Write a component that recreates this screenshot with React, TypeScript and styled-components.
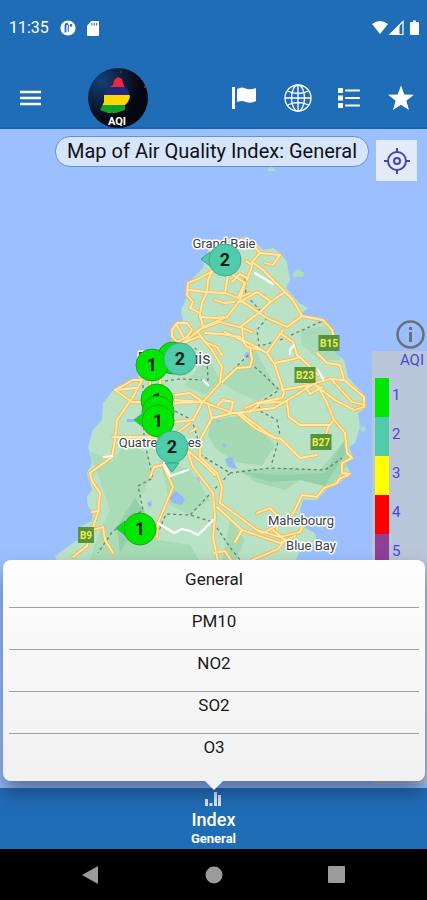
import React from "react";
import styled, { createGlobalStyle } from "styled-components";

const GlobalStyle = createGlobalStyle`
  *, *::before, *::after { box-sizing: border-box; }
  body { margin: 0; background: #000; font-family: Roboto, "Noto Sans", sans-serif; }
  button { font: inherit; color: inherit; border: 0; padding: 0; background: none; cursor: pointer; }
`;

const BLUE = "#206db7";

const Screen = styled.div`
  display: flex;
  flex-direction: column;
  min-height: 100vh;
`;

const StatusBar = styled.div`
  display: flex;
  align-items: center;
  justify-content: space-between;
  height: 56px;
  padding: 0 6px 0 9px;
  background: ${BLUE};
  color: #fff;
`;

const StatusGroup = styled.div<{ $gap: number }>`
  display: flex;
  align-items: center;
  gap: ${(p) => p.$gap}px;
`;

const Clock = styled.time`
  font-size: 16px;
  line-height: 20px;
`;

const Toolbar = styled.header`
  display: flex;
  align-items: center;
  justify-content: space-between;
  height: 73px;
  padding: 12px 12px 0 19px;
  background: ${BLUE};
  border-bottom: 2px solid #1565ae;
  color: #fff;
`;

const ToolGroup = styled.div<{ $gap: number }>`
  display: flex;
  align-items: center;
  gap: ${(p) => p.$gap}px;
`;

const IconButton = styled.button`
  display: flex;
  align-items: center;
  justify-content: center;
`;

const MapArea = styled.main`
  position: relative;
  flex: 1;
  min-height: 480px;
  background: #9cc0ff;
`;

const MapCanvas = styled.svg`
  position: absolute;
  inset: 0;
  width: 100%;
  height: 100%;
`;

const TitleRow = styled.div`
  position: relative;
  display: flex;
  align-items: flex-start;
  justify-content: flex-end;
  gap: 7px;
  padding: 7px 10px 0;
`;

const Title = styled.h1`
  margin: 0;
  padding: 0 11px;
  border: 1px solid #5b95d6;
  border-radius: 15px;
  background: #d6e5fb;
  color: #111;
  font-size: 20px;
  font-weight: 400;
  line-height: 29px;
  white-space: nowrap;
`;

const LocateButton = styled(IconButton)`
  width: 41px;
  height: 41px;
  margin-top: 4px;
  background: #e3ebfb;
`;

const InfoButton = styled(IconButton)`
  position: absolute;
  top: 191px;
  right: 2px;
`;

const Legend = styled.aside`
  position: absolute;
  top: 222px;
  right: 0;
  bottom: 4px;
  width: 55px;
  background: #bac6da;
  color: #4a46dc;
`;

const LegendTitle = styled.h2`
  margin: 0;
  padding: 0 3px 0 0;
  font-size: 15px;
  font-weight: 400;
  line-height: 18px;
  text-align: right;
`;

const LegendList = styled.ul`
  list-style: none;
  margin: 9px 0 0;
  padding: 0 0 0 3px;
`;

const LegendItem = styled.li<{ $color: string }>`
  display: flex;
  align-items: center;
  height: 39px;
  padding: 0 0 6px 3px;
  border-left: 14px solid ${(p) => p.$color};
  font-size: 15px;
`;

const Popover = styled.section`
  position: absolute;
  left: 3px;
  right: 2px;
  bottom: 7px;
  z-index: 2;
  padding: 6px;
  border-radius: 8px;
  background: linear-gradient(#fdfdfd, #f1f1f1);
  box-shadow: 0 12px 20px rgba(15, 35, 70, 0.5);

  &::after {
    content: "";
    position: absolute;
    top: 100%;
    left: 50%;
    margin-left: -9px;
    border: 9px solid transparent;
    border-top-color: #f1f1f1;
    border-bottom: 0;
  }
`;

const OptionList = styled.ul`
  list-style: none;
  margin: 0;
  padding: 0;

  li + li { border-top: 1px solid #9da29f; }
`;

const Option = styled.button`
  display: flex;
  justify-content: center;
  width: 100%;
  height: 41px;
  padding-top: 2px;
  color: #1b1b1b;
  font-size: 17px;
  font-weight: 400;
  line-height: 22px;
`;

const BottomBar = styled.nav`
  display: flex;
  justify-content: center;
  height: 61px;
  background: ${BLUE};
  color: #fff;
`;

const IndexTab = styled.button`
  display: flex;
  flex-direction: column;
  align-items: center;
  padding-top: 4px;
`;

const TabName = styled.span`
  margin-top: 2px;
  font-size: 18px;
  font-weight: 500;
  line-height: 22px;
`;

const TabValue = styled.span`
  font-size: 13px;
  font-weight: 700;
  line-height: 16px;
`;

const SystemBar = styled.nav`
  display: grid;
  grid-template-columns: repeat(3, 123px);
  justify-content: center;
  height: 51px;
  background: #000;
`;

const roads = [
  "M218 268 200 278 188 283 187 295 193 302 190 308 200 313",
  "M213 270 208 280 207 292 202 303 200 315 203 327",
  "M188 290 207 292 225 293 238 298 250 293",
  "M228 275 225 293M245 283 238 298",
  "M183 343 203 327 227 317 240 300 245 283 230 273",
  "M172 330 177 323 187 323 192 330 187 337 177 342 172 336Z M176 324 184 338",
  "M200 317 217 318 224 317M203 328 220 322 242 328 252 332",
  "M197 331 205 342 217 347 222 355",
  "M205 333 222 334 240 337 247 347 262 350",
  "M186 342 200 336 212 350 222 367 220 383 203 402 173 403",
  "M240 240 250 241 260 253 252 262 263 270 283 290 293 300 302 316 323 320 332 330 336 345",
  "M260 253 280 255 273 265 265 263M253 263 247 280 M246 261 252 265",
  "M240 327 260 312 270 302 285 292M240 302 257 292 272 302",
  "M240 300 267 318 287 327 302 316",
  "M242 328 243 340 267 353 283 330M243 340 225 332",
  "M280 333 293 342 297 355 300 358",
  "M232 282 240 274 247 278M215 300 224 303 234 302",
  "M237 338 257 347 267 353 275 365 280 380 284 393 282 398 257 403 245 408",
  "M250 347 252 360 250 367 237 368 222 382",
  "M274 363 290 360 300 357 310 367 318 375",
  "M317 353 327 363 340 365 344 380 364 397 364 407 354 410 335 400 315 385",
  "M332 380 352 402 364 405M315 383 330 379 344 380",
  "M237 413 257 410 274 408 296 395 315 383M282 390 310 385M306 388 310 394 322 387",
  "M287 402 289 417 300 425 330 425 334 420 327 403 318 386",
  "M334 420 345 433 347 453 352 458 342 463 342 473 350 474 339 479 337 483 324 488 317 497 302 495 295 510 290 518",
  "M237 413 255 428 274 438 280 438 300 458 317 455M329 425 325 437",
  "M257 513 270 508 279 517 277 529",
  "M175 395 190 393 203 402 233 413 250 412 260 403 280 402",
  "M175 400 203 402M212 418 233 413 M240 413 267 433 278 439",
  "M208 403 212 418 200 440 200 457 217 473 222 487 220 503 257 530 280 537 300 532",
  "M218 405 223 400 233 402 231 411",
  "M175 422 193 420 202 403M178 432 190 423M190 432 197 428",
  "M178 432 187 450 193 467 213 493 215 517 213 537 217 557 218 562",
  "M187 450 206 466 215 475M214 553 225 551 232 562",
  "M217 507 242 530 280 543 295 536M242 530 235 542M273 530 285 540 278 549 262 556 252 560",
  "M150 477 154 467 163 465 173 487 158 523 157 537",
  "M142 380 133 397 117 420 115 440 112 457 90 473 92 481 100 493 98 512 92 530 103 527 105 540 113 553",
  "M92 530 87 546 73 557M92 512 99 511",
  "M142 380 133 380 115 390 132 402 146 402M115 390 137 388",
  "M113 437 157 437M150 378 150 440M160 375 160 440M170 398 175 404",
  "M278 525 263 533 257 530M300 532 306 520",
];

const tracks = [
  "M245 278 246 295 267 318 257 330 259 346",
  "M257 347 280 340 325 320M257 347 240 363 220 383",
  "M165 381 180 379 208 380 207 360 195 348",
  "M250 363 263 374 279 390 264 400 258 410 277 420 280 435 271 466",
  "M143 385 144 440 153 478 138 486 143 510 112 532 98 553",
  "M175 411 192 420 198 440 201 455 230 473 210 494 190 515",
  "M230 473 270 468 325 470 342 458",
  "M157 535 166 514 190 515 213 522 232 550 242 562",
];

type Station = { x: number; y: number; level: number; dx?: number; dy?: number; covered?: boolean };
const levelColors = ["#00e600", "#50ccaa", "#ffff00", "#ff0000", "#8f3f97"];
const stations: Station[] = [
  { x: 225, y: 260, level: 2, dx: -1 },
  { x: 173, y: 358, level: 1, covered: true },
  { x: 152, y: 365, level: 1 },
  { x: 180, y: 359, level: 2 },
  { x: 157, y: 400, level: 1 },
  { x: 158, y: 412, level: 1, covered: true },
  { x: 158, y: 421, level: 1, dx: -1 },
  { x: 172, y: 447, level: 2, dy: 1 },
  { x: 140, y: 529, level: 1, dx: -1 },
];

const places = [
  { name: "Grand Baie", x: 224, y: 248, size: 13 },
  { name: "Port Louis", x: 174, y: 364, size: 16 },
  { name: "Quatre Bornes", x: 160, y: 447, size: 13 },
  { name: "Mahebourg", x: 301, y: 525, size: 13 },
  { name: "Blue Bay", x: 311, y: 550, size: 13 },
];

const shields = [
  { name: "B15", x: 329, y: 343, w: 21 },
  { name: "B23", x: 305, y: 375, w: 21 },
  { name: "B27", x: 321, y: 442, w: 21 },
  { name: "B9", x: 86, y: 535, w: 16 },
];

const LAND =
  "M208 250 222 240 246 237 257 244 263 250 273 248 280 253 287 262 290 280 286 288 299 303 308 308 301 314 312 319 328 325 336 338 332 350 344 360 348 377 366 397 365 409 358 413 360 427 355 443 349 447 353 457 346 463 350 473 340 483 327 489 317 500 303 500 300 510 304 527 315 533 317 543 307 549 299 552 280 600 230 670 120 660 70 600 55 556 73 543 78 540 80 527 92 521 93 512 88 507 87 497 92 490 87 473 92 463 88 447 93 430 102 420 103 403 115 388 138 379 143 355 172 345 171 329 183 320 181 310 187 297 188 283 203 268Z";

function IslandMap() {
  return (
    <MapCanvas viewBox="0 129 427 660" preserveAspectRatio="xMidYMin slice" role="img" aria-label="Map of Mauritius">
      <defs>
        <clipPath id="land"><path d={LAND} /></clipPath>
      </defs>
      <path d={LAND} fill="#bae2c4" />
      <path d="M293 273l5-4 6 4-1 4h-10ZM267 171l4-6 5 6ZM360 427l4-1 2 4-4 3Z" fill="#a9dfbc" />
      <g clipPath="url(#land)" fill="#a4d9b4">
        <path d="M300 330 330 325 340 360 320 360 302 345ZM235 370 255 350 277 388 258 401 237 392 222 383ZM207 355 220 380 205 395 185 385Z" opacity=".7" />
        <path d="M212 420 245 415 275 445 262 466 235 462 215 448 208 435ZM240 470 290 468 320 470 345 440 350 462 330 487 300 480 285 490 255 482Z" />
        <path d="M88 450 112 462 128 440 148 455 150 478 135 510 128 540 160 545 180 560H90L100 530 110 510 100 480ZM160 460 190 470 210 500 190 515 170 505Z" opacity=".75" />
        <path d="M125 510 140 505 157 540 190 545 200 562 120 562 118 535ZM230 520 245 540 235 562H222Z" opacity=".9" />
        <path d="M117 527 135 498 145 512 120 552ZM240 472 280 475 325 473 343 442 346 452 325 486 300 480 270 482Z" fill="#8fcca9" opacity=".8" />
      </g>
      <path d="M168 497l8-6 9 8-3 6-9-2ZM225 459l7-2 5 12-9-2ZM246 352l4 1-1 6-5-3ZM222 443l5 2-3 3ZM147 503l4-2 1 4-3 2ZM127 419h8l-1 3h-7ZM216 420l6 1-5 2ZM200 484l-4-7 3 1Z" fill="#96b9fb" />
      <g fill="none" stroke="#68806f" strokeWidth="1.3" strokeDasharray="3 3">
        {tracks.map((d) => <path key={d} d={d} />)}
      </g>
      <g fill="none" strokeLinejoin="round" strokeLinecap="round">
        {roads.map((d) => <path key={d} d={d} stroke="#fbb94e" strokeWidth="3.6" />)}
        {roads.map((d) => <path key={d} d={d} stroke="#ffecad" strokeWidth="1.8" />)}
        <path d="M255 273 273 284M164 463 170 476 188 470M158 523 174 533 182 529 190 531 198 535 213 520M318 370 323 379M290 354v-4l4-5M104 457l8-1M203 380l5 5" stroke="#fff" strokeWidth="2.2" />
      </g>
      <g fontWeight="400" textAnchor="middle" fill="#3b4248" stroke="#fff" strokeWidth="3" strokeLinejoin="round" paintOrder="stroke">
        {places.map((p) => <text key={p.name} x={p.x} y={p.y} fontSize={p.size}>{p.name}</text>)}
      </g>
      {shields.map((s) => (
        <g key={s.name}>
          <rect x={s.x - s.w / 2} y={s.y - 8} width={s.w} height="16" fill="#55933f" />
          <text x={s.x} y={s.y + 4} fontSize="10" fontWeight="700" textAnchor="middle" fill="#f4ee4e">{s.name}</text>
        </g>
      ))}
      {stations.map((s) => {
        const fill = levelColors[s.level - 1];
        return (
          <g key={`${s.x}-${s.y}`}>
            {s.dx && <path d={`M${s.x - 24} ${s.y - 1}l9-7v14Z`} fill={fill} stroke="#3fa583" strokeWidth="1" />}
            {s.dy && <path d={`M${s.x - 7} ${s.y + 16}h14l-7 9Z`} fill={fill} stroke="#3fa583" strokeWidth="1" />}
            <circle cx={s.x} cy={s.y} r="16" fill={fill} stroke={s.level === 1 ? "#1ba51e" : "#48a68d"} strokeWidth="1" />
            {!s.covered && (
              <text x={s.x} y={s.y + 6} fontSize="18" fontWeight="700" textAnchor="middle" fill="#0b1f14">{s.level}</text>
            )}
          </g>
        );
      })}
    </MapCanvas>
  );
}

function Logo() {
  return (
    <svg width="62" height="62" viewBox="0 0 62 62" role="img" aria-label="AQI">
      <defs>
        <radialGradient id="globe" cx="22%" cy="22%" r="65%">
          <stop offset="0" stopColor="#153f78" />
          <stop offset="1" stopColor="#050710" />
        </radialGradient>
        <clipPath id="isle">
          <path d="M31 10 35 12 37 19 41 22 43 30 41 35 38 38 38 43 29 46 21 46 13 43 15 39 17 35 17 27 21 21 26 18 27 13Z" />
        </clipPath>
      </defs>
      <circle cx="31" cy="31" r="30" fill="url(#globe)" />
      <g clipPath="url(#isle)">
        <path d="M0 8h62v12H0Z" fill="#ea2839" />
        <path d="M0 20h62v8H0Z" fill="#21277c" />
        <path d="M0 28h62v10H0Z" fill="#ffd500" />
        <path d="M0 38h62v10H0Z" fill="#10a02e" />
      </g>
      <circle cx="34" cy="5" r="1" fill="#8f2030" /><circle cx="58" cy="20" r="1" fill="#b02030" />
      <text x="30" y="58" fontSize="11" fontWeight="700" textAnchor="middle" fill="#fff">AQI</text>
    </svg>
  );
}

const options = ["General", "PM10", "NO2", "SO2", "O3"];

export default function App() {
  return (
    <Screen>
      <GlobalStyle />
      <StatusBar>
        <StatusGroup $gap={11}>
          <Clock>11:35</Clock>
          <svg width="16" height="16" viewBox="0 0 16 16" aria-hidden="true">
            <circle cx="8" cy="8" r="7.6" fill="#fff" />
            <path d="M5.5 12.5V5.2Q5.5 4 6.8 4H8" fill="none" stroke={BLUE} strokeWidth="1.8" />
            <path d="M8.3 4.500V12" fill="none" stroke={BLUE} strokeWidth="1" />
            <circle cx="11" cy="5.4" r="1.3" fill={BLUE} />
          </svg>
          <svg width="12" height="15" viewBox="0 0 12 15" aria-hidden="true">
            <path d="M4.5 0H11q1 0 1 1v13q0 1-1 1H1q-1 0-1-1V4.8Z" fill="#fff" />
            <path d="M5 2v2.6M7.3 2v2.6M9.6 2v2.6" stroke={BLUE} strokeWidth="1" />
          </svg>
        </StatusGroup>
        <svg width="50" height="16" viewBox="0 0 50 16" aria-hidden="true">
          <path d="M1 4Q9-2 17 4L9 14Z" fill="#fff" />
          <path d="M32 1.5V14.5H19Z" fill="none" stroke="#fff" strokeWidth="1.2" />
          <path d="M28.5 4.5V15H18Z" fill="#fff" />
          <path d="M40 2h2V.5h3V2h2q1 0 1 1v11q0 1-1 1h-7q-1 0-1-1V3q0-1 1-1Z" fill="#fff" />
        </svg>
      </StatusBar>

      <Toolbar>
        <ToolGroup $gap={45}>
          <IconButton aria-label="Menu">
            <svg width="23" height="18" viewBox="0 0 23 18"><path d="M1 3h21M1 9h21M1 15h21" stroke="#fff" strokeWidth="2.4" /></svg>
          </IconButton>
          <Logo />
        </ToolGroup>
        <ToolGroup $gap={26}>
          <IconButton aria-label="Flag">
            <svg width="26" height="26" viewBox="0 0 26 26" fill="#fff">
              <path d="M0 2h3v22H0ZM5 4q5-3 10 0q4 1 9-1v13q-5 3-10 1q-4-2-9 0Z" />
            </svg>
          </IconButton>
          <IconButton aria-label="Language">
            <svg width="28" height="28" viewBox="0 0 28 28" fill="none" stroke="#fff" strokeWidth="1.3">
              <circle cx="14" cy="14" r="13" /><ellipse cx="14" cy="14" rx="6.5" ry="13" />
              <path d="M1 14h26M14 1v26M3.5 7q10.500 5 21 0M3.5 21q10.500-5 21 0" />
            </svg>
          </IconButton>
          <IconButton aria-label="List">
            <svg width="23" height="22" viewBox="0 0 23 22" fill="#fff">
              <path d="M0 1h5v5H0ZM0 8.5h5v5H0ZM0 16h5v5H0Z" />
              <path d="M8 3.5h13M8 11h13M8 18.5h13" stroke="#fff" strokeWidth="2.2" strokeLinecap="round" />
            </svg>
          </IconButton>
          <IconButton aria-label="Favourites">
            <svg width="28" height="26" viewBox="0 0 28 26" fill="#fff">
              <path d="M14 .5 17.3 9.5 27 9.800 19.3 15.7 22 25 14 19.7 6 25 8.7 15.7 1 9.8 10.7 9.5Z" />
            </svg>
          </IconButton>
        </ToolGroup>
      </Toolbar>

      <MapArea>
        <IslandMap />
        <TitleRow>
          <Title>Map of Air Quality Index: General</Title>
          <LocateButton aria-label="My location">
            <svg width="26" height="26" viewBox="0 0 26 26" fill="none" stroke="#4745ad" strokeWidth="2">
              <circle cx="13" cy="13" r="9" /><circle cx="13" cy="13" r="3" />
              <path d="M13 0v5M13 21v5M0 13h5M21 13h5" />
            </svg>
          </LocateButton>
        </TitleRow>
        <Legend>
          <LegendTitle>AQI</LegendTitle>
          <LegendList>
            {levelColors.map((c, i) => <LegendItem key={c} $color={c}>{i + 1}</LegendItem>)}
          </LegendList>
        </Legend>
        <InfoButton aria-label="Information">
          <svg width="29" height="29" viewBox="0 0 29 29" fill="none" stroke="#6d7177">
            <circle cx="14.5" cy="14.5" r="13" strokeWidth="2.6" />
            <path d="M14.5 12v10M14.5 7v3" strokeWidth="3" />
          </svg>
        </InfoButton>
        <Popover aria-label="Choose an index">
          <OptionList>
            {options.map((o) => <li key={o}><Option>{o}</Option></li>)}
          </OptionList>
        </Popover>
      </MapArea>

      <BottomBar>
        <IndexTab>
          <svg width="18" height="15" viewBox="0 0 18 15" aria-hidden="true">
            <path d="M1 7h3v7H1ZM5.5 11h3v3h-3ZM10 0h3v14h-3ZM14 3h3v11h-3Z" fill="#dfeaf6" />
          </svg>
          <TabName>Index</TabName>
          <TabValue>General</TabValue>
        </IndexTab>
      </BottomBar>

      <SystemBar>
        <IconButton aria-label="Back">
          <svg width="18" height="20" viewBox="0 0 18 20"><path d="M16 1v18L0 10Z" fill="#9b9b9b" /></svg>
        </IconButton>
        <IconButton aria-label="Home">
          <svg width="18" height="18" viewBox="0 0 18 18"><circle cx="9" cy="9" r="8.5" fill="#9b9b9b" /></svg>
        </IconButton>
        <IconButton aria-label="Recent apps">
          <svg width="18" height="18" viewBox="0 0 18 18"><rect x="0" y="0" width="17" height="17" rx="1" fill="#9b9b9b" /></svg>
        </IconButton>
      </SystemBar>
    </Screen>
  );
}
